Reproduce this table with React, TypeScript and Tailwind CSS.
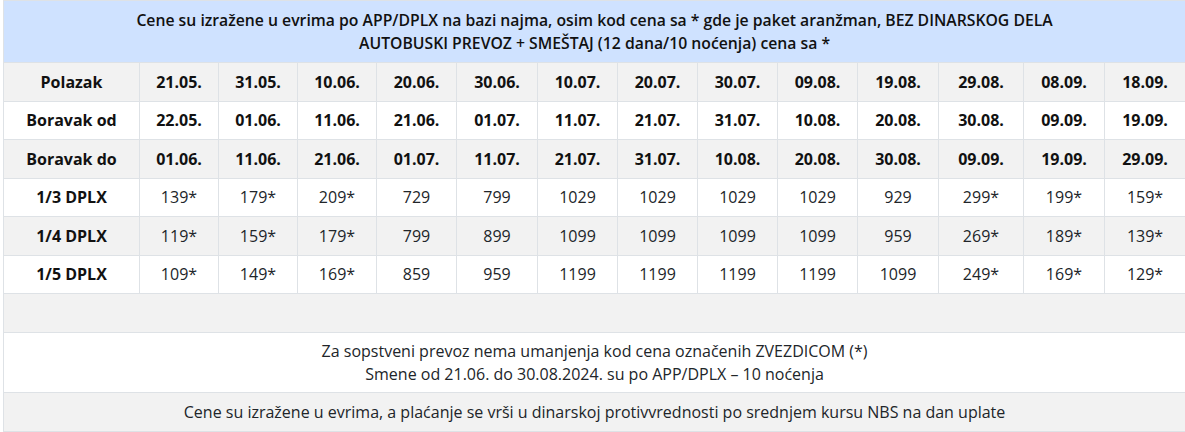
const cols = [136, 79, 79, 79, 80, 81, 80, 80, 80, 80, 81, 85, 81, 81]

const dateRows = [
  {
    label: "Polazak",
    values: ["21.05.", "31.05.", "10.06.", "20.06.", "30.06.", "10.07.", "20.07.", "30.07.", "09.08.", "19.08.", "29.08.", "08.09.", "18.09."],
  },
  {
    label: "Boravak od",
    values: ["22.05.", "01.06.", "11.06.", "21.06.", "01.07.", "11.07.", "21.07.", "31.07.", "10.08.", "20.08.", "30.08.", "09.09.", "19.09."],
  },
  {
    label: "Boravak do",
    values: ["01.06.", "11.06.", "21.06.", "01.07.", "11.07.", "21.07.", "31.07.", "10.08.", "20.08.", "30.08.", "09.09.", "19.09.", "29.09."],
  },
]

const priceRows = [
  {
    label: "1/3 DPLX",
    values: ["139*", "179*", "209*", "729", "799", "1029", "1029", "1029", "1029", "929", "299*", "199*", "159*"],
  },
  {
    label: "1/4 DPLX",
    values: ["119*", "159*", "179*", "799", "899", "1099", "1099", "1099", "1099", "959", "269*", "189*", "139*"],
  },
  {
    label: "1/5 DPLX",
    values: ["109*", "149*", "169*", "859", "959", "1199", "1199", "1199", "1199", "1099", "249*", "169*", "129*"],
  },
]

export default function App() {
  const rows = [...dateRows.map((r) => ({ ...r, bold: true })), ...priceRows.map((r) => ({ ...r, bold: false }))]

  return (
    <div className="bg-white pl-[3px] font-['Open_Sans',sans-serif] text-[16px] text-[#212529]">
      <table className="w-[1182px] table-fixed border-collapse">
        <colgroup>
          {cols.map((w, i) => (
            <col key={i} style={{ width: w }} />
          ))}
        </colgroup>
        <tbody>
          <tr className="h-[62px] bg-[#cfe2ff]">
            <td colSpan={14} className="border border-[#dee2e6] text-center text-[15.75px] font-semibold leading-[23px] text-[#111]">
              Cene su izražene u evrima po APP/DPLX na bazi najma, osim kod cena sa * gde je paket aranžman, BEZ DINARSKOG DELA
              <br />
              AUTOBUSKI PREVOZ + SMEŠTAJ (12 dana/10 noćenja) cena sa *
            </td>
          </tr>
          {rows.map((row, i) => (
            <tr key={row.label} className={`h-[38.5px] ${i % 2 === 0 ? "bg-[#f2f2f2]" : "bg-white"}`}>
              <td className="border border-[#dee2e6] text-center font-bold text-[#111]">{row.label}</td>
              {row.values.map((v, j) => (
                <td
                  key={j}
                  className={`border border-[#dee2e6] text-center ${row.bold ? "font-bold text-[#111]" : "font-normal"}`}
                >
                  {v}
                </td>
              ))}
            </tr>
          ))}
          <tr className="h-[39px] bg-[#f2f2f2]">
            <td colSpan={14} className="border border-[#dee2e6]"></td>
          </tr>
          <tr className="h-[60px] bg-white">
            <td colSpan={14} className="border border-[#dee2e6] text-center leading-[23px]">
              Za sopstveni prevoz nema umanjenja kod cena označenih ZVEZDICOM (*)
              <br />
              Smene od 21.06. do 30.08.2024. su po APP/DPLX – 10 noćenja
            </td>
          </tr>
          <tr className="h-[39px] bg-[#f2f2f2]">
            <td colSpan={14} className="border border-[#dee2e6] text-center">
              Cene su izražene u evrima, a plaćanje se vrši u dinarskoj protivvrednosti po srednjem kursu NBS na dan uplate
            </td>
          </tr>
        </tbody>
      </table>
    </div>
  )
}
